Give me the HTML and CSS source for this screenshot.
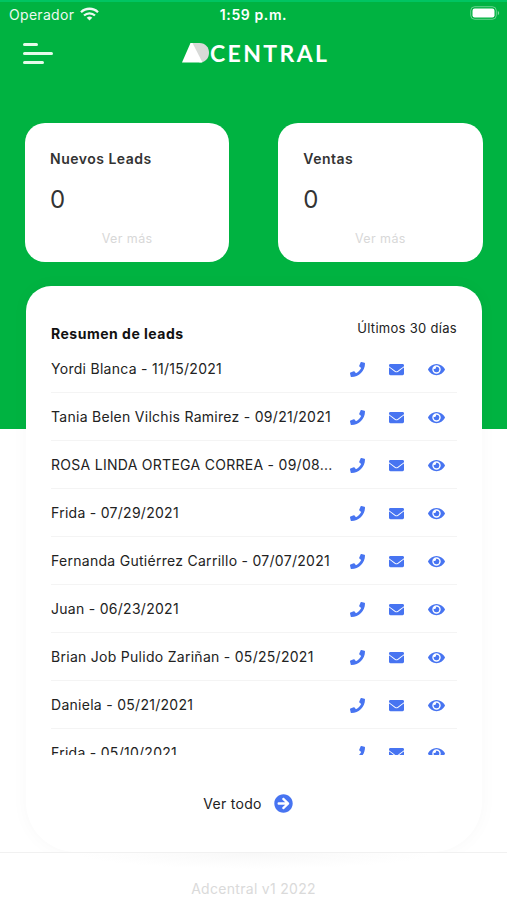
FILE: index.html
```html
<!DOCTYPE html>
<html lang="es">
<head>
    <meta charset="UTF-8">
    <meta name="viewport" content="width=device-width, initial-scale=1.0">
    <title>Adcentral</title>
    <link rel="stylesheet" href="styles.css">
</head>
<body>
    <!-- Icons -->
    <svg class="sprite" width="0" height="0">
        <symbol id="phone" viewBox="0 0 512 512"><path d="M493.4 24.6l-104-24c-11.3-2.6-22.9 3.3-27.5 13.9l-48 112c-4.2 9.8-1.4 21.3 6.9 28l60.6 49.6c-36 76.7-98.9 140.5-177.2 177.2l-49.6-60.6c-6.8-8.3-18.2-11.1-28-6.9l-112 48C3.9 366.5-2 378.1.6 389.4l24 104C27.1 504.2 36.7 512 48 512c256.1 0 464-207.5 464-464 0-11.2-7.7-20.9-18.6-23.4z"/></symbol>
        <symbol id="mail" viewBox="0 0 512 512"><path d="M502.3 190.8c3.9-3.1 9.7-.2 9.7 4.7V400c0 26.5-21.5 48-48 48H48c-26.5 0-48-21.5-48-48V195.6c0-5 5.7-7.8 9.7-4.7 22.4 17.4 52.1 39.5 154.1 113.6 21.1 15.4 56.7 47.8 92.2 47.6 35.7.3 72-32.8 92.3-47.6 102-74.1 131.6-96.3 154-113.7zM256 320c23.2.4 56.6-29.2 73.4-41.4 132.7-96.3 142.8-104.7 173.4-128.7 5.8-4.5 9.2-11.5 9.2-18.9v-19c0-26.5-21.5-48-48-48H48c-26.5 0-48 21.5-48 48v19c0 7.4 3.4 14.3 9.2 18.9 30.6 23.9 40.7 32.4 173.4 128.7 16.8 12.2 50.2 41.8 73.4 41.4z"/></symbol>
        <symbol id="eye" viewBox="0 0 576 512"><path d="M572.52 241.4C518.29 135.59 410.93 64 288 64S57.68 135.64 3.48 241.41a32.35 32.35 0 0 0 0 29.19C57.71 376.41 165.07 448 288 448s230.32-71.64 284.52-177.41a32.35 32.35 0 0 0 0-29.19zM288 400a144 144 0 1 1 144-144 143.93 143.93 0 0 1-144 144zm0-240a95.31 95.31 0 0 0-25.31 3.79 47.85 47.85 0 0 1-66.9 66.9A95.78 95.78 0 1 0 288 160z"/></symbol>
    </svg>

    <div class="app">
        <!-- Status bar -->
        <div class="status-bar">
            <div class="carrier">
                <span>Operador</span>
                <svg width="19" height="14" viewBox="0 0 19 14" fill="none" stroke="#fff" stroke-width="2.3">
                    <path d="M1 5.2a12.2 12.2 0 0 1 17 0"/>
                    <path d="M4 8.5a8 8 0 0 1 11 0"/>
                    <path d="M9.5 13.6L6.7 10.8a4 4 0 0 1 5.6 0z" fill="#fff" stroke="none"/>
                </svg>
            </div>
            <div class="time">1:59 p.m.</div>
            <div class="battery">
                <svg width="30" height="14" viewBox="0 0 30 14">
                    <rect x=".7" y=".7" width="25.6" height="12.6" rx="4" fill="none" stroke="#fff" stroke-opacity=".4"/>
                    <rect x="2.5" y="2.5" width="22" height="9" rx="2.2" fill="#fff"/>
                    <path d="M27.8 5v4.2c1.8-.6 1.8-3.6 0-4.2z" fill="#fff" fill-opacity=".5"/>
                </svg>
            </div>
        </div>

        <!-- Header -->
        <header>
            <div class="menu">
                <span class="line short"></span>
                <span class="line"></span>
                <span class="line medium"></span>
            </div>
            <div class="logo">
                <svg width="28" height="20" viewBox="0 0 28 20">
                    <path d="M8.5 0H17.5C23.5 0 27 4.5 27 9.7S23.5 19.5 17.5 19.5z" fill="#d8dad8"/>
                    <path d="M0 19.5L8.5 0h2l10 19.5z" fill="#fff"/>
                </svg>
                <span>CENTRAL</span>
            </div>
        </header>

        <!-- Totals -->
        <section class="totals">
            <div class="card">
                <h2>Nuevos Leads</h2>
                <p class="number">0</p>
                <a class="more">Ver más</a>
            </div>
            <div class="card">
                <h2>Ventas</h2>
                <p class="number">0</p>
                <a class="more">Ver más</a>
            </div>
        </section>

        <!-- Leads -->
        <main class="leads">
            <div class="leads-header">
                <h2>Resumen de leads</h2>
                <span>Últimos 30 días</span>
            </div>
            <ul class="leads-list">
                <li><span class="name">Yordi Blanca - 11/15/2021</span><svg><use href="#phone"/></svg><svg><use href="#mail"/></svg><svg class="eye"><use href="#eye"/></svg></li>
                <li><span class="name">Tania Belen Vilchis Ramirez - 09/21/2021</span><svg><use href="#phone"/></svg><svg><use href="#mail"/></svg><svg class="eye"><use href="#eye"/></svg></li>
                <li><span class="name">ROSA LINDA ORTEGA CORREA - 09/08...</span><svg><use href="#phone"/></svg><svg><use href="#mail"/></svg><svg class="eye"><use href="#eye"/></svg></li>
                <li><span class="name">Frida - 07/29/2021</span><svg><use href="#phone"/></svg><svg><use href="#mail"/></svg><svg class="eye"><use href="#eye"/></svg></li>
                <li><span class="name">Fernanda Gutiérrez Carrillo - 07/07/2021</span><svg><use href="#phone"/></svg><svg><use href="#mail"/></svg><svg class="eye"><use href="#eye"/></svg></li>
                <li><span class="name">Juan - 06/23/2021</span><svg><use href="#phone"/></svg><svg><use href="#mail"/></svg><svg class="eye"><use href="#eye"/></svg></li>
                <li><span class="name">Brian Job Pulido Zariñan - 05/25/2021</span><svg><use href="#phone"/></svg><svg><use href="#mail"/></svg><svg class="eye"><use href="#eye"/></svg></li>
                <li><span class="name">Daniela - 05/21/2021</span><svg><use href="#phone"/></svg><svg><use href="#mail"/></svg><svg class="eye"><use href="#eye"/></svg></li>
                <li><span class="name">Frida - 05/10/2021</span><svg><use href="#phone"/></svg><svg><use href="#mail"/></svg><svg class="eye"><use href="#eye"/></svg></li>
            </ul>
            <a class="see-all">
                <span>Ver todo</span>
                <svg width="19" height="19" viewBox="0 0 512 512"><path d="M256 8c137 0 248 111 248 248S393 504 256 504 8 393 8 256 119 8 256 8zm-28.9 143.6l75.5 72.4H120c-13.3 0-24 10.7-24 24v16c0 13.3 10.7 24 24 24h182.6l-75.5 72.4c-9.7 9.3-9.9 24.8-.4 34.3l11 10.9c9.4 9.4 24.6 9.4 33.9 0L404.3 273c9.4-9.4 9.4-24.6 0-33.900L271.6 106.3c-9.4-9.4-24.6-9.4-33.9 0l-11 10.9c-9.5 9.6-9.3 25.1.4 34.4z"/></svg>
            </a>
        </main>

        <footer>
            <p>Adcentral v1 2022</p>
        </footer>
    </div>
</body>
</html>
```
FILE: styles.css
```css
* {
    box-sizing: border-box;
    margin: 0;
    padding: 0;
}

body {
    font-family: Inter, "Liberation Sans", sans-serif;
    font-size: 14px;
    letter-spacing: 0.3px;
    color: #222;
    background-color: #fff;
}

.sprite {
    display: none;
}

.app {
    display: flex;
    flex-direction: column;
    height: 900px;
    overflow: hidden;
    /* green block behind the top half of the screen */
    background: linear-gradient(#00b341, #00b341) no-repeat 0 0 / 100% 427px;
    border-top: 2px solid #00c562;
}

/* Status bar */
.status-bar {
    display: grid;
    grid-template-columns: 1fr auto 1fr;
    align-items: center;
    height: 24px;
    padding: 0 7px 0 9px;
    color: #fff;
}

.carrier {
    display: flex;
    align-items: center;
    gap: 6px;
    opacity: 0.93;
}

.time {
    margin-left: -2px;
    font-weight: 600;
    letter-spacing: 0.6px;
}

.battery {
    display: flex;
    justify-content: flex-end;
    height: 16px;
}

/* Header */
header {
    display: flex;
    align-items: center;
    height: 54px;
    padding-left: 22.5px;
}

.menu {
    display: flex;
    flex-direction: column;
    gap: 6px;
    width: 159.5px;
}

.line {
    width: 30.5px;
    height: 3px;
    border-radius: 2px;
    background: #e6fbea;
}

.line.short {
    width: 15.5px;
}

.line.medium {
    width: 21.5px;
}

.logo {
    display: flex;
    align-items: center;
    color: #fff;
    font-family: Lato, sans-serif;
    font-weight: 700;
    font-size: 23px;
    line-height: 24px;
    letter-spacing: 2.4px;
}

/* Totals */
.totals {
    display: grid;
    grid-template-columns: 1fr 1fr;
    gap: 49px;
    padding: 43px 24.5px 0 25px;
}

.card {
    height: 139px;
    padding: 26px 25px 0;
    border-radius: 20px;
    background: #fff;
    color: #333;
}

.card h2 {
    font-size: 14px;
    line-height: 20px;
    font-weight: 600;
    letter-spacing: 0.5px;
}

.number {
    margin-top: 15px;
    font-size: 24px;
    line-height: 32px;
    letter-spacing: 0;
}

.more {
    display: block;
    margin-top: 13px;
    text-align: center;
    font-size: 12.5px;
    line-height: 20px;
    letter-spacing: 0.4px;
    color: #d8d8d8;
}

/* Leads */
.leads {
    height: 566px;
    margin: 24px 25px 0 26px;
    padding: 30px 25px 0;
    border-radius: 25px 25px 50px 50px;
    background: #fff;
    box-shadow: 0 0 18px rgba(0, 0, 0, 0.03);
}

.leads-header {
    display: flex;
    justify-content: space-between;
    height: 29px;
}

.leads-header h2 {
    padding-top: 8px;
    font-size: 14px;
    line-height: 20px;
    font-weight: 700;
    letter-spacing: 0.5px;
    color: #111;
}

.leads-header span {
    font-size: 13px;
    line-height: 24px;
}

.leads-list {
    height: 410px;
    overflow: hidden;
    list-style: none;
}

.leads-list li {
    display: grid;
    grid-template-columns: 287px 39px 39px 41px;
    align-items: center;
    height: 48px;
    border-bottom: 1px solid #f4f4f4;
}

.name {
    width: 285px;
    overflow: hidden;
    white-space: nowrap;
    text-overflow: ellipsis;
    line-height: 20px;
    letter-spacing: 0.28px;
}

.leads-list svg {
    width: 15px;
    height: 15px;
    margin-top: 1px;
    justify-self: center;
    fill: #4774f1;
}

.leads-list .eye {
    width: 17px;
}

.see-all {
    display: flex;
    align-items: center;
    justify-content: center;
    gap: 12px;
    height: 96px;
    padding-right: 12px;
}

.see-all svg {
    fill: #4774f1;
}

/* Footer */
footer {
    flex: 1;
    padding-top: 26px;
    border-top: 1px solid #f1f1f1;
    background: radial-gradient(ellipse at top, #f8f8f8, #fff 70%) no-repeat 50% 0 / 360px 16px, #fff;
    text-align: center;
    line-height: 20px;
    color: #dadada;
}
```
